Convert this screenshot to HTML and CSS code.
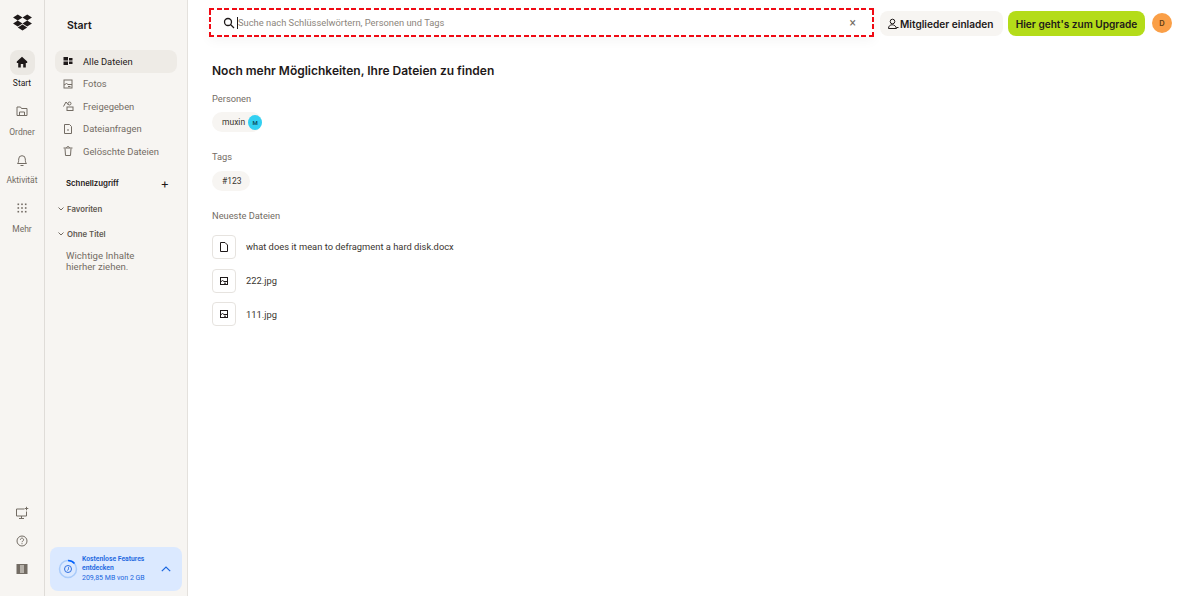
FILE: index.html
```html
<!DOCTYPE html>
<html lang="de">
<head>
<meta charset="utf-8">
<title>Start – Dropbox</title>
<link rel="stylesheet" href="styles.css">
</head>
<body>
<div class="app">
  <nav class="rail">
    <svg class="logo" viewBox="0 0 20 18" width="19" height="17"><path fill="#1e1919" d="M5 .5 0 3.700l5 3.200-5 3.200 5 3.200 5-3.200 5 3.200 5-3.200-5-3.200 5-3.200L15 .5l-5 3.200zM10 3.700l5 3.200-5 3.200-5-3.200zM5 14.400l5 3.200 5-3.200-5-3.200z"/></svg>
    <a class="rail-item active">
      <span class="rail-icon"><svg viewBox="0 0 14 14" width="14" height="14"><path fill="#1e1919" d="M7 .8 1.800 5.500V7h1.400v4.500h2.600V8h2.400v3.500h2.600V7h1.400V5.500z"/></svg></span>
      <span class="rail-label">Start</span>
    </a>
    <a class="rail-item">
      <span class="rail-icon"><svg viewBox="0 0 14 14" width="14" height="14" fill="none" stroke="#736c64"><path d="M2 11.500v-8.500h3.500l1 1.500h5.500v7z"/><path d="M4.500 11.500V8h5v3.500"/></svg></span>
      <span class="rail-label">Ordner</span>
    </a>
    <a class="rail-item">
      <span class="rail-icon"><svg viewBox="0 0 14 14" width="14" height="14" fill="none" stroke="#736c64"><path d="M2.500 10.500c1-1 1.200-2 1.200-4.500a3.300 3.300 0 0 1 6.600 0c0 2.500.2 3.500 1.200 4.500z"/><path d="M5.500 12.500h3"/></svg></span>
      <span class="rail-label">Aktivität</span>
    </a>
    <a class="rail-item">
      <span class="rail-icon"><svg viewBox="0 0 14 14" width="14" height="14" fill="#736c64"><rect x="2.500" y="2.500" width="1.600" height="1.600"/><rect x="6.200" y="2.500" width="1.600" height="1.600"/><rect x="9.900" y="2.500" width="1.600" height="1.600"/><rect x="2.500" y="6.200" width="1.600" height="1.600"/><rect x="6.200" y="6.200" width="1.600" height="1.600"/><rect x="9.900" y="6.200" width="1.600" height="1.600"/><rect x="2.500" y="9.900" width="1.600" height="1.600"/><rect x="6.200" y="9.900" width="1.600" height="1.600"/><rect x="9.900" y="9.900" width="1.600" height="1.600"/></svg></span>
      <span class="rail-label">Mehr</span>
    </a>
    <div class="rail-bottom">
      <svg viewBox="0 0 14 14" width="14" height="14" fill="none" stroke="#736c64"><path d="M9.500 3H1.500v7h10V5.500"/><path d="M6.500 10v2M4 12.500h5"/><path d="M11.500 .8v3.500M9.800 2.500h3.500"/></svg>
      <svg viewBox="0 0 14 14" width="14" height="14" fill="none" stroke="#736c64"><circle cx="7" cy="7" r="5"/><path d="M5.400 5.700a1.600 1.600 0 1 1 2.400 1.400c-.6.300-.8.600-.8 1.100"/><path d="M7 9.200v1"/></svg>
      <svg viewBox="0 0 14 14" width="14" height="14"><rect x="2" y="2.500" width="10" height="9" fill="#b5b0a9" stroke="#736c64"/><rect x="2" y="2.500" width="3" height="9" fill="#736c64"/><rect x="9" y="2.500" width="3" height="9" fill="#736c64"/></svg>
    </div>
  </nav>

  <aside class="panel">
    <h2 class="panel-title">Start</h2>
    <ul class="nav-list">
      <li class="nav-item current"><svg viewBox="0 0 12 12" width="12" height="12" fill="#1e1919"><rect x="1.500" y="2" width="4.500" height="3.500"/><rect x="1.500" y="6.500" width="4.500" height="3.500"/><rect x="7" y="3" width="3.500" height="2.500"/><rect x="7" y="6.500" width="3.500" height="2.500"/></svg>Alle Dateien</li>
      <li class="nav-item"><svg viewBox="0 0 12 12" width="12" height="12" fill="none" stroke="#736c64"><rect x="2" y="2" width="8" height="8"/><path d="M2 7 4.500 5.500 6 6.500h4M6 8.500h2.500"/></svg>Fotos</li>
      <li class="nav-item"><svg viewBox="0 0 12 12" width="12" height="12" fill="none" stroke="#736c64"><path d="M1.500 6.500 4 2l2.500 3"/><circle cx="7.500" cy="3.500" r="1.500"/><rect x="5" y="7" width="6" height="3.500"/></svg>Freigegeben</li>
      <li class="nav-item"><svg viewBox="0 0 12 12" width="12" height="12" fill="none" stroke="#736c64"><path d="M2.500 1.500h5l2 2v7h-7z"/><path d="M6 6v2"/></svg>Dateianfragen</li>
      <li class="nav-item"><svg viewBox="0 0 12 12" width="12" height="12" fill="none" stroke="#736c64"><path d="M3 3.500 3.500 10.500h5l.5-7"/><path d="M1.500 3h9M4.500 3c0-2 3-2 3 0"/></svg>Gelöschte Dateien</li>
    </ul>
    <div class="quick-head"><span>Schnellzugriff</span><span class="plus">+</span></div>
    <div class="group"><svg viewBox="0 0 6 4" width="6" height="4" fill="none" stroke="#736c64"><path d="m.5.500 2.500 2.500 2.500-2.500"/></svg>Favoriten</div>
    <div class="group"><svg viewBox="0 0 6 4" width="6" height="4" fill="none" stroke="#736c64"><path d="m.5.500 2.500 2.500 2.500-2.500"/></svg>Ohne Titel</div>
    <p class="hint">Wichtige Inhalte<br>hierher ziehen.</p>
    <div class="storage">
      <svg class="storage-ring" viewBox="0 0 22 22" width="22" height="22" fill="none"><circle cx="11" cy="11" r="8.500" stroke="#a9cbfa" stroke-width="1.500"/><path d="M11 2.500a8.500 8.500 0 0 1 6.500 3" stroke="#0061fe" stroke-width="1.500"/><circle cx="11" cy="11" r="3.500" stroke="#2f6fe0"/><path d="M11.500 9v2.500l-1.500 1" stroke="#2f6fe0" stroke-width=".8"/></svg>
      <div class="storage-text">
        <strong>Kostenlose Features entdecken</strong>
        <span>209,85 MB von 2 GB</span>
      </div>
      <svg class="storage-caret" viewBox="0 0 10 6" width="10" height="6" fill="none" stroke="#1a66e0" stroke-width="1.200"><path d="m.8 5.200 4.200-4.200 4.200 4.200"/></svg>
    </div>
  </aside>

  <main class="main">
    <header class="topbar">
      <div class="search">
        <svg viewBox="0 0 12 12" width="12" height="12" fill="none" stroke="#1e1919" stroke-width="1.300"><circle cx="5" cy="5" r="3.500"/><path d="m7.500 7.500 3.500 3.500"/></svg>
        <span class="caret"></span>
        <span class="placeholder">Suche nach Schlüsselwörtern, Personen und Tags</span>
        <span class="clear">×</span>
      </div>
      <button class="btn invite"><svg viewBox="0 0 12 12" width="12" height="12" fill="none" stroke="#1e1919"><circle cx="5.500" cy="3.500" r="2.300"/><path d="M1.500 10.500c0-5 7-5 8 0zM9.500 9.500h2"/></svg>Mitglieder einladen</button>
      <button class="btn upgrade">Hier geht's zum Upgrade</button>
      <span class="avatar">D</span>
    </header>

    <section class="content">
      <h1>Noch mehr Möglichkeiten, Ihre Dateien zu finden</h1>
      <h3>Personen</h3>
      <div class="chip person">muxin<span class="chip-avatar">M</span></div>
      <h3 class="tags-head">Tags</h3>
      <div class="chip tag">#123</div>
      <h3 class="recent-head">Neueste Dateien</h3>
      <ul class="files">
        <li><span class="file-icon"><svg viewBox="0 0 12 12" width="12" height="12" fill="none" stroke="#1e1919"><path d="M2.500 1.500h4.500l2.500 2.500v6.500h-7z"/></svg></span>what does it mean to defragment a hard disk.docx</li>
        <li><span class="file-icon"><svg viewBox="0 0 12 12" width="12" height="12" fill="none" stroke="#1e1919"><rect x="2.500" y="2.500" width="7" height="7"/><path d="M2.500 7 4.500 5.500 6 6.500h3.500M6 8.200h2"/></svg></span>222.jpg</li>
        <li><span class="file-icon"><svg viewBox="0 0 12 12" width="12" height="12" fill="none" stroke="#1e1919"><rect x="2.500" y="2.500" width="7" height="7"/><path d="M2.500 7 4.500 5.500 6 6.500h3.500M6 8.200h2"/></svg></span>111.jpg</li>
      </ul>
    </section>
  </main>
</div>
</body>
</html>
```
FILE: styles.css
```css
* { box-sizing: border-box; }
html, body { margin: 0; height: 100%; }
body { font-family: Roboto, "Liberation Sans", sans-serif; color: #1e1919; background: #fff; overflow: hidden; }
.app { display: flex; height: 596px; }

.rail { width: 45px; flex: none; background: #f7f5f2; border-right: 1px solid #dfdcd8; display: flex; flex-direction: column; align-items: center; padding-top: 14px; }
.logo { margin-bottom: 19px; }
.rail-item { display: flex; flex-direction: column; align-items: center; width: 44px; height: 48.500px; }
.rail-icon { width: 25px; height: 25px; border-radius: 8px; display: flex; align-items: center; justify-content: center; }
.active .rail-icon { background: #ebe8e3; }
.rail-label { font-size: 8.500px; line-height: 12px; margin-top: 2px; color: #736c64; }
.active .rail-label { color: #1e1919; }
.rail-bottom { margin-top: auto; display: flex; flex-direction: column; align-items: center; gap: 14px; padding-bottom: 20px; }

.panel { width: 143px; flex: none; background: #f7f5f2; border-right: 1px solid #e4e1dd; padding: 0 5px 5px; display: flex; flex-direction: column; }
.panel-title { font-family: Inter, sans-serif; font-size: 10.500px; font-weight: 600; margin: 19px 0 17px 17px; line-height: 14px; }
.nav-list { list-style: none; margin: 0 5px; padding: 0; }
.nav-item { display: flex; align-items: center; gap: 9px; height: 22.500px; padding-left: 7px; font-size: 9.400px; color: #736c64; border-radius: 8px; }
.nav-item.current { color: #1e1919; background: #eeebe6; }
.quick-head { display: flex; justify-content: space-between; align-items: center; margin: 11px 13px 0 16px; height: 18px; font-family: Inter, sans-serif; font-size: 7.800px; font-weight: 600; }
.plus { font-size: 13px; font-weight: 400; }
.group { display: flex; align-items: center; gap: 3px; margin: 8px 0 0 8px; height: 17px; font-family: Inter, sans-serif; font-size: 7.800px; font-weight: 600; color: #5e5850; }
.quick-head + .group { margin-top: 9px; }
.hint { margin: 7px 0 0 16px; font-size: 9.600px; line-height: 11px; color: #736c64; }
.storage { margin-top: auto; height: 44px; background: #dbe9ff; border-radius: 8px; display: flex; align-items: center; padding: 0 11px 0 7px; gap: 3px; }
.storage-ring { flex: none; }
.storage-text { flex: 1; display: flex; flex-direction: column; color: #1a66e0; font-size: 7px; line-height: 8.500px; }
.storage-text strong { font-size: 6.800px; font-weight: 600; margin-bottom: 2px; }

.main { flex: 1; min-width: 0; display: flex; flex-direction: column; }
.topbar { display: flex; align-items: flex-start; padding: 8px 27px 0 21px; }
.search {
  width: 665px; height: 29px; display: flex; align-items: center; padding: 0 18px 0 14px; font-size: 9.350px; color: #8c857c;
  box-shadow: 0 4px 12px rgba(0,0,0,.04);
  background:
    repeating-linear-gradient(90deg, #f00a14 0 5px, transparent 5px 7.500px) top / 100% 2px no-repeat,
    repeating-linear-gradient(90deg, #f00a14 0 5px, transparent 5px 7.500px) bottom / 100% 2px no-repeat,
    repeating-linear-gradient(0deg, #f00a14 0 5px, transparent 5px 7.500px) left / 2px 100% no-repeat,
    repeating-linear-gradient(0deg, #f00a14 0 5px, transparent 5px 7.500px) right / 2px 100% no-repeat;
}
.caret { width: 1px; height: 12px; background: #1e1919; margin-left: 2px; }
.placeholder { flex: 1; }
.clear { font-size: 12px; color: #736c64; }
.btn { border: 0; font-family: Inter, sans-serif; font-weight: 600; color: #1e1919; border-radius: 8px; height: 25px; font-size: 10.100px; display: flex; align-items: center; white-space: nowrap; padding: 0; }
.invite { margin-left: 6px; margin-top: 3px; width: 123px; background: #f7f5f2; padding-left: 7px; gap: 1px; }
.upgrade { margin-left: 5px; margin-top: 3px; width: 137px; background: #b4dc19; justify-content: center; }
.avatar { width: 20px; height: 20px; margin-left: 7px; margin-top: 5px; border-radius: 50%; background: #fa9f47; color: #5c3a11; font-family: Inter, sans-serif; font-size: 7.500px; font-weight: 600; display: flex; align-items: center; justify-content: center; }

.content { padding: 0 0 0 24px; }
h1 { font-family: Inter, sans-serif; font-size: 12px; font-weight: 600; margin: 25px 0 0; line-height: 18px; }
h3 { font-size: 9.300px; font-weight: 400; color: #736c64; margin: 12px 0 0; line-height: 14px; }
.chip { display: flex; align-items: center; height: 20px; border-radius: 10px; background: #f7f5f2; font-size: 8.500px; padding-left: 10px; gap: 3px; margin-top: 6px; color: #3a3530; }
.chip.person { width: 50px; }
.chip.tag { width: 38px; margin-top: 7px; }
.chip-avatar { width: 15px; height: 15px; border-radius: 50%; background: #32d0f2; color: #0c4a5a; font-size: 6px; font-weight: 600; display: flex; align-items: center; justify-content: center; }
.tags-head { margin-top: 18px; }
.recent-head { margin-top: 18px; }
.files { list-style: none; margin: 7px 0 0; padding: 0; font-size: 9.350px; color: #3a3530; }
.files li { display: flex; align-items: center; gap: 10px; height: 33.800px; }
.file-icon { width: 24px; height: 24px; border: 1px solid #e6e3df; border-radius: 4px; display: flex; align-items: center; justify-content: center; }
```
